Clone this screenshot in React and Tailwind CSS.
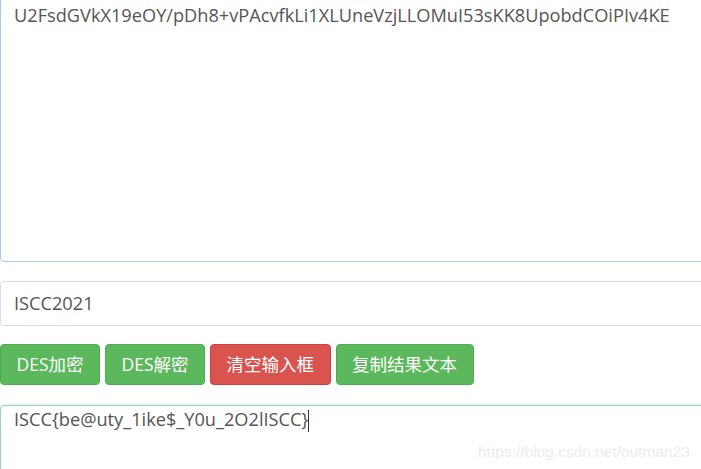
import React from 'react';

const font = { fontFamily: '"Open Sans", "Noto Sans CJK SC", sans-serif' };

function Btn({ children, red }) {
  return (
    <button
      className={
        red
          ? 'h-[41px] px-[15.5px] rounded-[4px] border border-[#d43f3a] bg-[#d9534f] text-white text-[17.5px]'
          : 'h-[41px] px-[15.5px] rounded-[4px] border border-[#4cae4c] bg-[#5cb85c] text-white text-[17.5px]'
      }
    >
      {children}
    </button>
  );
}

export default function App() {
  return (
    <div className="w-[701px] h-[469px] overflow-hidden bg-white text-[#555]" style={font}>
      <div className="w-[720px] h-[280px] -mt-[18px] border border-[#a9cbe9] rounded-[4px] pl-[13px] pt-[20px] text-[18.2px] leading-[24px]">
        U2FsdGVkX19eOY/pDh8+vPAcvfkLi1XLUneVzjLLOMuI53sKK8UpobdCOiPIv4KE
      </div>
      <div className="mt-[19px] w-[720px] h-[45px] border border-[#dcdcdc] rounded-[4px] pl-[13px] flex items-center text-[18.2px]">
        ISCC2021
      </div>
      <div className="mt-[18px] flex gap-[5px]">
        <Btn>DES加密</Btn>
        <Btn>DES解密</Btn>
        <Btn red>清空输入框</Btn>
        <Btn>复制结果文本</Btn>
      </div>
      <div className="relative mt-[20px] w-[720px] h-[100px] border border-[#9ccfb6] rounded-[4px] shadow-[0_0_3px_rgba(102,175,233,0.4)] pl-[13px] pt-[1px] text-[18.2px] leading-[24px]">
        ISCC{'{'}be@uty_1ike$_Y0u_2O2lISCC{'}'}<span className="inline-block w-px h-[22px] bg-[#333] align-middle"></span>
        <div className="absolute left-[477px] top-[34px] text-[15.5px] text-[#ececec]" style={{ fontFamily: '"Liberation Sans", sans-serif' }}>
          https://blog.csdn.net/outman23
        </div>
      </div>
    </div>
  );
}
